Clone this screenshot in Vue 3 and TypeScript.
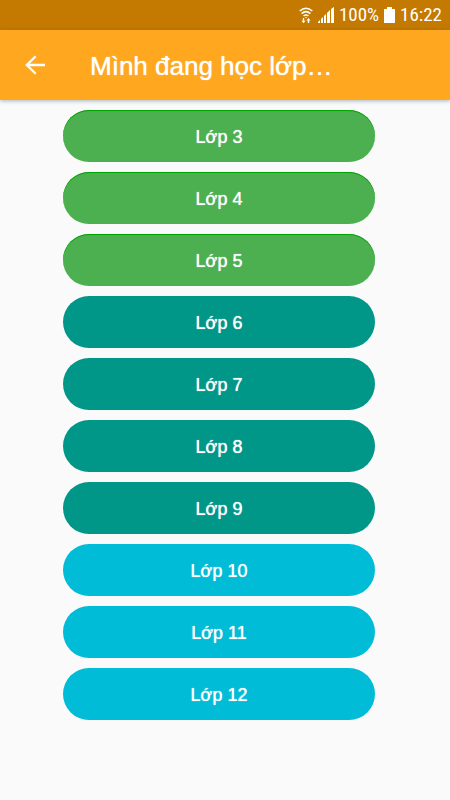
<script setup lang="ts">
type Level = 'primary' | 'secondary' | 'high'

interface Grade {
  value: number
  level: Level
}

const levelOf = (value: number): Level =>
  value <= 5 ? 'primary' : value <= 9 ? 'secondary' : 'high'

const grades: Grade[] = Array.from({ length: 10 }, (_, i) => ({
  value: i + 3,
  level: levelOf(i + 3),
}))
</script>

<template>
  <div class="screen">
    <div class="status">
      <svg class="wifi" viewBox="0 0 14 17" aria-hidden="true">
        <g fill="none" stroke="#fff" stroke-width="1.5">
          <path d="M.7 4Q7-1.6 13.3 4" />
          <path d="M2.6 6.6Q7 2.6 11.4 6.6" />
          <path d="M4.6 9Q7 7 9.4 9" />
        </g>
        <path fill="#fff" d="M6 10h2l-1 1.4z" />
        <path fill="#fff" d="M3.8 11h1.4v2.8h1.4L4.5 16.2 2.4 13.8h1.4zM8.8 16h1.4v-2.6h1.4L9.5 11l-2.1 2.4h1.4z" />
      </svg>
      <svg class="signal" viewBox="0 0 16 16" aria-hidden="true">
        <path fill="#fff" d="M0 16v-1l2-2v3zM3 16v-4l2-2v6zM6 16V9l2-2v9zM9 16V6l3-3v13zM13 16V2l3-2v16z" />
      </svg>
      <span>100%</span>
      <svg class="battery" viewBox="0 0 11 16" aria-hidden="true">
        <path fill="#fff" d="M3 0h5v2h3v14H0V2h3z" />
      </svg>
      <span>16:22</span>
    </div>
    <header class="bar">
      <button class="back" type="button" aria-label="Quay lại">
        <svg viewBox="0 0 20 20" aria-hidden="true">
          <path d="M20 10H2M10.7 1.2 1.8 10l8.9 8.8" fill="none" stroke="#fff" stroke-width="2.3" />
        </svg>
      </button>
      <h1>Mình đang học lớp…</h1>
    </header>
    <main class="grades">
      <button
        v-for="grade in grades"
        :key="grade.value"
        type="button"
        class="grade"
        :class="grade.level"
      >
        Lớp {{ grade.value }}
      </button>
    </main>
  </div>
</template>

<style>
body {
  margin: 0;
  background: #fafafa;
}
</style>

<style scoped>
.screen {
  min-height: 100vh;
  background: #fafafa;
  color: #fff;
  font-family: "Liberation Sans", Arial, sans-serif;
}

.status {
  display: flex;
  align-items: center;
  justify-content: flex-end;
  gap: 5px;
  height: 30px;
  padding: 0 8px;
  background: #c47900;
  font: 19px/30px "Roboto Condensed", Roboto, sans-serif;
}

.wifi {
  width: 14px;
  height: 17px;
}

.signal {
  width: 16px;
  height: 16px;
}

.battery {
  width: 11px;
  height: 16px;
}

.bar {
  display: flex;
  align-items: center;
  gap: 35px;
  height: 70px;
  padding: 0 15px;
  background: #ffa71f;
  box-shadow: 0 1px 4px rgba(40, 80, 100, 0.4);
}

.back {
  display: flex;
  align-items: center;
  justify-content: center;
  width: 40px;
  height: 40px;
  padding: 0;
  border: 0;
  background: none;
}

.back svg {
  width: 20px;
  height: 20px;
}

h1 {
  margin: 0;
  padding-top: 2px;
  font-size: 26px;
  font-weight: 400;
  line-height: 40px;
  white-space: nowrap;
  text-shadow: 0 0 1px #fff;
}

.grades {
  display: flex;
  flex-direction: column;
  gap: 10px;
  padding: 10px 75px 10px 63px;
}

.grade {
  height: 52px;
  padding: 2px 0 0;
  border: 0;
  border-radius: 26px;
  color: #fff;
  font: 18px/24px "Liberation Sans", Arial, sans-serif;
  text-shadow: 0 0 1px #fff;
}

.primary {
  background: #4caf50;
  box-shadow: inset 0 1px 0 #00a400;
}

.secondary {
  background: #009688;
}

.high {
  background: #00bcd7;
}
</style>
